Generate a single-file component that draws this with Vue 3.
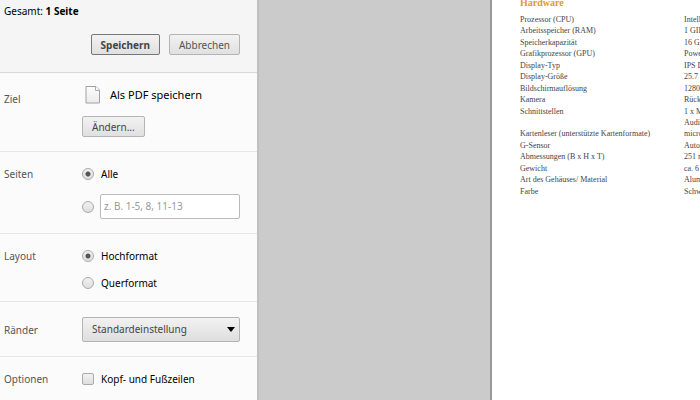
<script setup>
import { ref } from 'vue'

const pages = ref('all')
const range = ref('')
const layout = ref('portrait')
const margins = ref('default')
const headers = ref(false)

const specs = [
  ['Prozessor (CPU)', 'Intell'],
  ['Arbeitsspeicher (RAM)', '1 GIB'],
  ['Speicherkapazität', '16 G'],
  ['Grafikprozessor (GPU)', 'Powe'],
  ['Display-Typ', 'IPS D'],
  ['Display-Größe', '25.7'],
  ['Bildschirmauflösung', '1280'],
  ['Kamera', 'Rück'],
  ['Schnittstellen', '1 x M\nAudi'],
  ['Kartenleser (unterstützte Kartenformate)', 'micro'],
  ['G-Sensor', 'Auto'],
  ['Abmessungen (B x H x T)', '251 m'],
  ['Gewicht', 'ca. 6'],
  ['Art des Gehäuses/ Material', 'Alum'],
  ['Farbe', 'Schw'],
]
</script>

<template>
  <div class="print">
    <form class="sidebar" @submit.prevent>
      <header class="head">
        <p class="total">Gesamt: <strong>1 Seite</strong></p>
        <div class="actions">
          <button type="submit" class="btn primary">Speichern</button>
          <button type="button" class="btn cancel">Abbrechen</button>
        </div>
      </header>

      <section class="row target">
        <h2 class="name">Ziel</h2>
        <div class="body">
          <div class="dest">
            <svg class="page-icon" width="16" height="20" viewBox="0 0 16 20" aria-hidden="true">
              <defs>
                <linearGradient id="paper" x1="0" y1="0" x2="0" y2="1">
                  <stop offset="0" stop-color="#fdfdfd" />
                  <stop offset="1" stop-color="#ebebeb" />
                </linearGradient>
              </defs>
              <path d="M1 1.5H11L14.5 5V18H1Z" fill="url(#paper)" stroke="#a0a0a0" />
              <path d="M10.5 1.5V5.5H14.5" fill="#fff" stroke="#aaa" />
            </svg>
            <span>Als PDF speichern</span>
          </div>
          <button type="button" class="btn change">Ändern...</button>
        </div>
      </section>

      <section class="row pages">
        <h2 class="name">Seiten</h2>
        <div class="body">
          <label class="choice"><input v-model="pages" type="radio" name="pages" value="all" />Alle</label>
          <div class="choice custom">
            <input v-model="pages" type="radio" name="pages" value="range" aria-label="Seitenbereich" />
            <input v-model="range" class="range" type="text" placeholder="z. B. 1-5, 8, 11-13" aria-label="Seiten" />
          </div>
        </div>
      </section>

      <section class="row layout">
        <h2 class="name">Layout</h2>
        <div class="body">
          <label class="choice"><input v-model="layout" type="radio" name="layout" value="portrait" />Hochformat</label>
          <label class="choice"><input v-model="layout" type="radio" name="layout" value="landscape" />Querformat</label>
        </div>
      </section>

      <section class="row margins">
        <label class="name" for="margins">Ränder</label>
        <div class="body picker">
          <select id="margins" v-model="margins">
            <option value="default">Standardeinstellung</option>
            <option value="none">Keine</option>
          </select>
          <svg class="arrow" width="8" height="5" viewBox="0 0 8 5" aria-hidden="true">
            <path d="M0 0H8L4 5Z" fill="#000" />
          </svg>
        </div>
      </section>

      <section class="row options">
        <h2 class="name">Optionen</h2>
        <div class="body">
          <label class="choice"><input v-model="headers" type="checkbox" />Kopf- und Fußzeilen</label>
        </div>
      </section>
    </form>

    <main class="preview">
      <article class="sheet">
        <h1>Hardware</h1>
        <table>
          <tbody>
            <tr v-for="[key, value] in specs" :key="key">
              <th scope="row">{{ key }}</th>
              <td>{{ value }}</td>
            </tr>
          </tbody>
        </table>
      </article>
    </main>
  </div>
</template>

<style>
body {
  margin: 0;
  overflow: hidden;
}
</style>

<style scoped>
.print,
.print * {
  box-sizing: border-box;
}

.print {
  display: flex;
  height: 100vh;
  overflow: hidden;
  background: #cbcbcb;
  font: 10px/16px "Noto Sans", "Open Sans", sans-serif;
  color: #000;
}

.sidebar {
  flex: 0 0 37%;
  min-width: 0;
  border-right: 2px solid #c0c0c0;
  background: #fbfbfb;
}

.head {
  padding: 3px 17px 17px 4px;
  border-bottom: 1px solid #d8d8d8;
  background: #f5f5f5;
}

.total {
  margin: 0 0 15px;
}

.actions {
  display: flex;
  justify-content: flex-end;
  gap: 9px;
}

.btn {
  height: 21px;
  padding: 0 9px;
  border: 1px solid #b4b4b4;
  border-radius: 2px;
  background: linear-gradient(#f2f2f2, #e0e0e0);
  font: inherit;
  line-height: 16px;
  color: #444;
}

.primary {
  border-color: #777;
  font-weight: bold;
}

.cancel {
  color: #555;
}

.row {
  display: grid;
  grid-template-columns: 78px minmax(0, 1fr);
  padding: 0 17px 0 4px;
  border-bottom: 1px solid #e6e6e6;
}

.name {
  margin: 0;
  font: inherit;
  color: #555;
}

.target {
  padding-top: 12px;
  padding-bottom: 14px;
}

.target .name {
  padding-top: 6px;
}

.dest {
  display: flex;
  align-items: center;
  gap: 9px;
  height: 20px;
  margin-bottom: 11px;
  padding-left: 3px;
  font-size: 11px;
}

.pages {
  padding-top: 14px;
  padding-bottom: 14px;
}

.layout {
  padding-top: 14px;
  padding-bottom: 10px;
}

.margins {
  align-items: center;
  padding-top: 15px;
  padding-bottom: 14px;
}

.options {
  padding-top: 14px;
  border-bottom: 0;
}

.choice {
  display: flex;
  align-items: center;
  gap: 7px;
}

.layout .choice + .choice {
  margin-top: 11px;
}

.custom {
  gap: 6px;
  margin-top: 12px;
}

input[type="radio"],
input[type="checkbox"] {
  appearance: none;
  flex: none;
  width: 12px;
  height: 12px;
  margin: 0;
  border: 1px solid #aaa;
  border-radius: 2px;
  background: linear-gradient(#f1f1f1, #dedede);
}

input[type="radio"] {
  border-radius: 50%;
}

input[type="radio"]:checked {
  background: radial-gradient(circle, #555 2px, transparent 3px), linear-gradient(#f1f1f1, #dedede);
}

.range {
  flex: 1;
  min-width: 0;
  height: 25px;
  padding: 0 3px 2px;
  border: 1px solid #bbb;
  border-radius: 2px;
  background: #fff;
  font: inherit;
  color: #111;
}

.range::placeholder {
  color: #999;
  opacity: 1;
}

.picker {
  position: relative;
}

select {
  display: block;
  appearance: none;
  width: 100%;
  height: 25px;
  padding: 0 20px 2px 9px;
  border: 1px solid #b4b4b4;
  border-radius: 2px;
  background: linear-gradient(#f2f2f2, #dedede);
  font: inherit;
  color: #444;
}

.arrow {
  position: absolute;
  top: 10px;
  right: 5px;
  pointer-events: none;
}

.preview {
  display: flex;
  flex: 1;
  min-width: 0;
  padding-left: 33%;
}

.sheet {
  flex: 1;
  min-width: 0;
  overflow: hidden;
  padding-left: 28px;
  border-left: 2px solid #999;
  background: #fff;
  font-family: "Liberation Serif", serif;
  font-size: 8px;
  line-height: 11px;
  color: #444;
}

h1 {
  margin: -3px 0 6px;
  font-size: 10px;
  line-height: 11px;
  color: #e9962a;
}

table {
  border-collapse: collapse;
}

th,
td {
  padding: 0;
  vertical-align: top;
  text-align: left;
  font-weight: normal;
  white-space: pre;
}

th {
  min-width: 164px;
}

tr:nth-child(even) > * {
  padding-bottom: 1px;
}
</style>
